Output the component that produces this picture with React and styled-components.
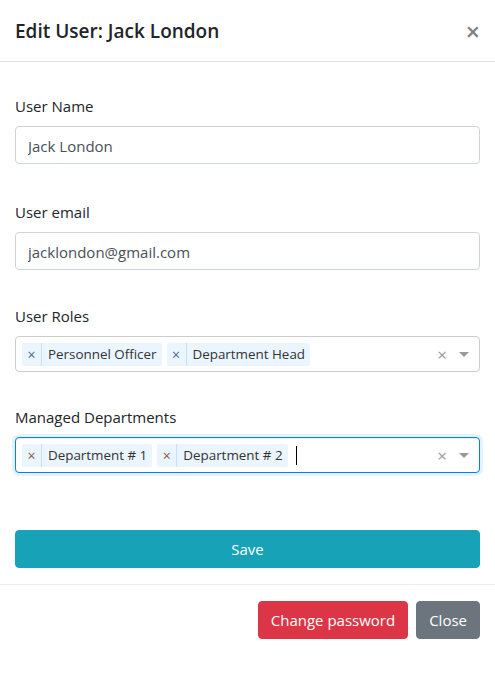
import React from "react";
import styled, { createGlobalStyle } from "styled-components";

const GlobalStyle = createGlobalStyle`
  html, body { margin: 0; padding: 0; background: #fff; }
  body {
    font-family: "Open Sans", "Noto Sans", "Liberation Sans", sans-serif;
    color: #212529;
    -webkit-font-smoothing: antialiased;
  }
  * { box-sizing: border-box; }
`;

const Modal = styled.div`
  width: 100%;
  background: #fff;
`;

const Header = styled.div`
  display: flex;
  align-items: center;
  justify-content: space-between;
  padding: 16px 15px 15px 15px;
  border-bottom: 1px solid #dee2e6;
`;

const Title = styled.h5`
  margin: 0;
  font-size: 19px;
  font-weight: 600;
  line-height: 30px;
  color: #212529;
`;

const CloseX = styled.button`
  border: 0;
  background: transparent;
  padding: 0;
  font-family: inherit;
  font-size: 25px;
  font-weight: 600;
  line-height: 30px;
  color: #000;
  opacity: 0.5;
  cursor: pointer;
`;

const Body = styled.div`
  padding: 32px 15px 16px 15px;
  border-bottom: 1px solid #e9ecef;
`;

const Group = styled.div`
  margin-bottom: ${(p) => p.$mb}px;
`;

const Label = styled.label`
  display: block;
  margin-bottom: 8px;
  font-size: 15px;
  line-height: 24px;
  color: #212529;
`;

const Input = styled.input`
  display: block;
  width: 100%;
  height: 38px;
  padding: 7px 12px 5px;
  font-family: inherit;
  font-size: 15px;
  line-height: 24px;
  color: #495057;
  background: #fff;
  border: 1px solid #ced4da;
  border-radius: 4px;
  outline: none;
`;

const Control = styled.div`
  display: flex;
  align-items: center;
  height: 36px;
  padding-left: 6px;
  border: 1px solid ${(p) => (p.$focused ? "#007eff" : "#ccc")};
  border-radius: 4px;
  background: #fff;
  box-shadow: ${(p) =>
    p.$focused
      ? "inset 0 1px 1px rgba(0,0,0,.075), 0 0 0 3px rgba(0,126,255,.1)"
      : "none"};
`;

const Values = styled.div`
  flex: 1;
  display: flex;
  align-items: center;
  gap: 5px;
  min-width: 0;
`;

const Tag = styled.div`
  display: flex;
  align-items: stretch;
  height: 23px;
  background: #ebf5ff;
  border-radius: 2px;
  font-size: 13.4px;
  line-height: 23px;
  color: #333;
`;

const TagRemove = styled.span`
  display: flex;
  align-items: center;
  justify-content: center;
  width: 20px;
  border-right: 1px solid #c2e0ff;
  font-size: 14px;
  color: ${(p) => p.$color || "#4a6a8a"};
`;

const TagLabel = styled.span`
  padding: 0 5px 0 6px;
  white-space: nowrap;
`;

const Caret = styled.span`
  display: inline-block;
  width: 1px;
  height: 19px;
  margin-left: 3px;
  background: #000;
`;

const ClearZone = styled.span`
  width: 14px;
  text-align: center;
  font-size: 17px;
  line-height: 1;
  color: #999;
`;

const ArrowZone = styled.span`
  display: flex;
  align-items: center;
  justify-content: center;
  width: 30px;
`;

const Arrow = styled.span`
  width: 0;
  height: 0;
  border-style: solid;
  border-width: 5px 5px 2.5px;
  border-color: #999 transparent transparent;
  margin-top: 3px;
`;

const Button = styled.button`
  display: inline-block;
  height: 38px;
  padding: 6px 12px;
  font-family: inherit;
  font-size: 15px;
  line-height: 24px;
  color: #fff;
  background: ${(p) => p.$bg};
  border: 1px solid ${(p) => p.$bg};
  border-radius: 4px;
  cursor: pointer;
`;

const BlockButton = styled(Button)`
  display: block;
  width: 100%;
`;

const Footer = styled.div`
  display: flex;
  justify-content: flex-end;
  gap: 8px;
  padding: 16px 15px;
`;

function MultiSelect({ values, focused, removeColor }) {
  return (
    <Control $focused={focused}>
      <Values>
        {values.map((v) => (
          <Tag key={v}>
            <TagRemove $color={removeColor}>×</TagRemove>
            <TagLabel>{v}</TagLabel>
          </Tag>
        ))}
        {focused && <Caret />}
      </Values>
      <ClearZone>×</ClearZone>
      <ArrowZone>
        <Arrow />
      </ArrowZone>
    </Control>
  );
}

export default function App() {
  return (
    <>
      <GlobalStyle />
      <Modal>
        <Header>
          <Title>Edit User: Jack London</Title>
          <CloseX aria-label="Close">×</CloseX>
        </Header>
        <Body>
          <Group $mb={36}>
            <Label>User Name</Label>
            <Input defaultValue="Jack London" />
          </Group>
          <Group $mb={34}>
            <Label>User email</Label>
            <Input defaultValue="jacklondon@gmail.com" />
          </Group>
          <Group $mb={33}>
            <Label>User Roles</Label>
            <MultiSelect values={["Personnel Officer", "Department Head"]} />
          </Group>
          <Group $mb={57}>
            <Label>Managed Departments</Label>
            <MultiSelect
              values={["Department # 1", "Department # 2"]}
              focused
              removeColor="#8a5a3a"
            />
          </Group>
          <BlockButton $bg="#17a2b8">Save</BlockButton>
        </Body>
        <Footer>
          <Button $bg="#dc3545">Change password</Button>
          <Button $bg="#6c757d">Close</Button>
        </Footer>
      </Modal>
    </>
  );
}
